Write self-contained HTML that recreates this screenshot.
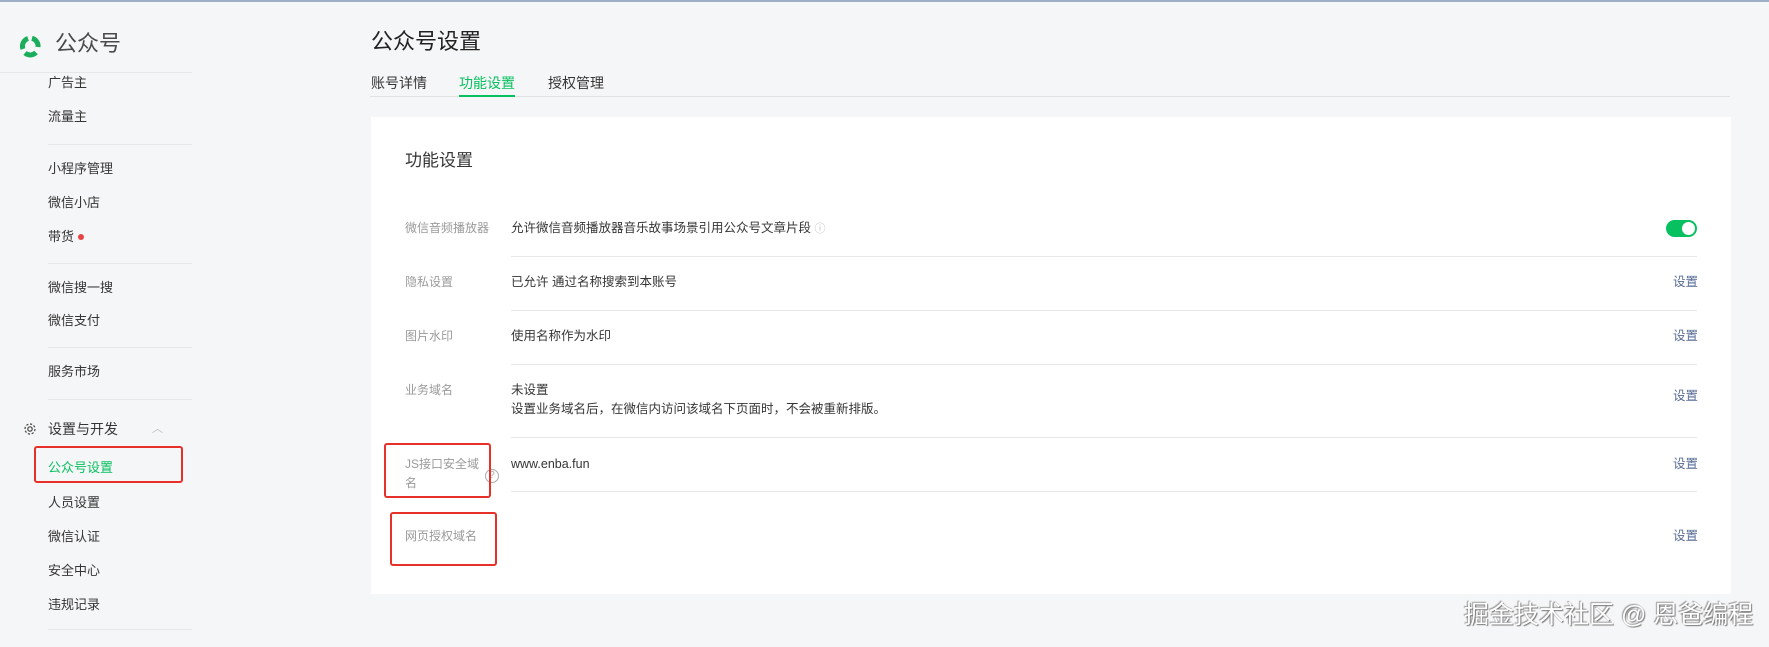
<!DOCTYPE html>
<html><head><meta charset="utf-8"><style>
*{margin:0;padding:0;box-sizing:border-box}
body{width:1769px;height:647px;background:#f5f6f7;font-family:"Liberation Sans","Noto Sans CJK SC",sans-serif;position:relative;overflow:hidden;color:#333}
.a{position:absolute;white-space:nowrap}
.si{position:absolute;left:48px;font-size:13px;color:#353535;line-height:18px}
.sep{position:absolute;left:48px;width:144px;height:1px;background:#e6e7e9}
.lb{position:absolute;left:405px;font-size:12px;color:#9a9a9a;line-height:18px}
.vl{position:absolute;left:511px;font-size:12.5px;color:#353535;line-height:18px}
.st{position:absolute;left:1673px;font-size:12.5px;color:#576b95;line-height:18px}
.ln{position:absolute;left:511px;width:1186px;height:1px;background:#e7e7e7}
.rb{position:absolute;border:2px solid #e8302a;border-radius:3px}
</style></head><body>
<div class="a" style="left:0;top:0;width:1769px;height:2px;background:#9fb0c6"></div>
<svg class="a" style="left:17px;top:33px" width="26" height="26" viewBox="0 0 26 26">
<g fill="none" stroke="#1aad5c" stroke-width="5" stroke-linecap="butt">
<path d="M6 16 A8 8 0 0 1 11 5.5"/>
<path d="M15 5.3 A8 8 0 0 1 21 14"/>
<path d="M19 19.5 A8 8 0 0 1 8 20"/>
</g></svg>
<div class="a" style="left:55px;top:30px;font-size:22px;color:#4a4a4a;line-height:28px">公众号</div>
<div class="a" style="left:0;top:72px;width:192px;height:1px;background:#e6e7e9"></div>
<div class="si" style="top:74px">广告主</div>
<div class="si" style="top:108px">流量主</div>
<div class="sep" style="top:144px"></div>
<div class="si" style="top:160px">小程序管理</div>
<div class="si" style="top:194px">微信小店</div>
<div class="si" style="top:228px">带货</div>
<div class="a" style="left:78px;top:234px;width:6px;height:6px;border-radius:3px;background:#e54545"></div>
<div class="sep" style="top:263px"></div>
<div class="si" style="top:279px">微信搜一搜</div>
<div class="si" style="top:312px">微信支付</div>
<div class="sep" style="top:347px"></div>
<div class="si" style="top:363px">服务市场</div>
<div class="sep" style="top:399px"></div>
<svg class="a" style="left:23px;top:422px" width="14" height="14" viewBox="0 0 14 14"><circle cx="7" cy="7" r="2.2" fill="none" stroke="#444" stroke-width="1.2"/><circle cx="7" cy="7" r="5" fill="none" stroke="#444" stroke-width="1.2" stroke-dasharray="2.2 1.7"/></svg>
<div class="si" style="top:420px;font-size:14px">设置与开发</div>
<div class="a" style="left:152px;top:420px;font-size:11px;color:#bbb">︿</div>
<div class="si" style="top:459px;color:#07c160">公众号设置</div>
<div class="rb" style="left:34px;top:446px;width:149px;height:37px"></div>
<div class="si" style="top:494px">人员设置</div>
<div class="si" style="top:528px">微信认证</div>
<div class="si" style="top:562px">安全中心</div>
<div class="si" style="top:596px">违规记录</div>
<div class="sep" style="top:629px"></div>

<div class="a" style="left:371px;top:28px;font-size:22px;color:#222;line-height:28px">公众号设置</div>
<div class="a" style="left:371px;top:74px;font-size:14px;color:#353535;line-height:18px">账号详情</div>
<div class="a" style="left:459px;top:74px;font-size:14px;color:#07c160;line-height:18px">功能设置</div>
<div class="a" style="left:548px;top:74px;font-size:14px;color:#353535;line-height:18px">授权管理</div>
<div class="a" style="left:370px;top:96px;width:1360px;height:1px;background:#e2e2e2"></div>
<div class="a" style="left:459px;top:95px;width:56px;height:2px;background:#07c160"></div>

<div class="a" style="left:371px;top:117px;width:1360px;height:477px;background:#fff"></div>
<div class="a" style="left:405px;top:150px;font-size:17px;color:#353535;line-height:22px">功能设置</div>

<div class="lb" style="top:219px">微信音频播放器</div>
<div class="vl" style="top:219px">允许微信音频播放器音乐故事场景引用公众号文章片段 <span style="color:#bbb;font-size:11px">ⓘ</span></div>
<div class="a" style="left:1666px;top:220px;width:31px;height:17px;border-radius:9px;background:#07c160"></div>
<div class="a" style="left:1682px;top:222px;width:13px;height:13px;border-radius:7px;background:#fff"></div>
<div class="ln" style="top:256px"></div>

<div class="lb" style="top:273px">隐私设置</div>
<div class="vl" style="top:273px">已允许 通过名称搜索到本账号</div>
<div class="st" style="top:273px">设置</div>
<div class="ln" style="top:310px"></div>

<div class="lb" style="top:327px">图片水印</div>
<div class="vl" style="top:327px">使用名称作为水印</div>
<div class="st" style="top:327px">设置</div>
<div class="ln" style="top:364px"></div>

<div class="lb" style="top:381px">业务域名</div>
<div class="vl" style="top:381px">未设置</div>
<div class="vl" style="top:400px">设置业务域名后，在微信内访问该域名下页面时，不会被重新排版。</div>
<div class="st" style="top:387px">设置</div>
<div class="ln" style="top:437px"></div>

<div class="lb" style="top:455px">JS接口安全域</div>
<div class="lb" style="top:474px">名</div>
<div class="a" style="left:485px;top:469px;width:14px;height:14px;border:1px solid #aaa;border-radius:7px;font-size:10px;color:#aaa;text-align:center;line-height:12px">?</div>
<div class="vl" style="top:455px">www.enba.fun</div>
<div class="st" style="top:455px">设置</div>
<div class="ln" style="top:491px"></div>
<div class="rb" style="left:384px;top:443px;width:107px;height:55px"></div>

<div class="lb" style="top:527px">网页授权域名</div>
<div class="st" style="top:527px">设置</div>
<div class="rb" style="left:390px;top:512px;width:107px;height:54px"></div>

<div class="a" style="left:1464px;top:600px;font-size:25px;color:#fff;line-height:30px;text-shadow:1px 1px 1px #777,-1px -1px 1px #999">掘金技术社区 @ 恩爸编程</div>
</body></html>
